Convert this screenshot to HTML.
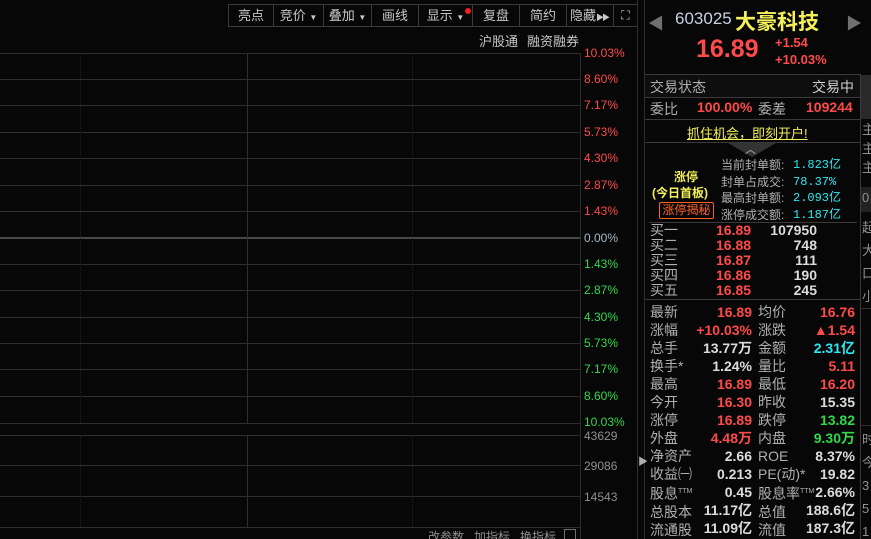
<!DOCTYPE html><html><head><meta charset="utf-8"><style>
*{margin:0;padding:0;box-sizing:border-box}
html,body{width:871px;height:539px;overflow:hidden}
body{background:#070707;position:relative;font-family:"Liberation Sans","Noto Sans CJK SC",sans-serif;font-size:13px;color:#c8c8c8}
.a{position:absolute;white-space:nowrap}
.h{position:absolute;height:1px;background:#2e2e2e}
.v{position:absolute;width:1px;background:#2e2e2e}
.d{position:absolute;width:0;border-left:1px dotted #222}
.btn{position:absolute;top:4px;height:23px;border:1px solid #3a3a3a;border-left:none;color:#c8c8c8;font-size:13px;text-align:center;line-height:21px;white-space:nowrap;overflow:hidden}
.pl{position:absolute;left:584px;font-size:12px}
.r{color:#ff4a4a}.g{color:#30d84a}.w{color:#dcdcdc}.c{color:#2ee8f0}.y{color:#f4f05a}
.lb{position:absolute;left:650px;color:#b0b0b0;font-size:14px}
.lb2{position:absolute;left:758px;color:#b0b0b0;font-size:14px}
</style></head><body>
<div class="btn" style="left:228px;width:46px;border-left:1px solid #3a3a3a">亮点</div>
<div class="btn" style="left:274px;width:50px">竞价 <span style="font-size:8px">▼</span></div>
<div class="btn" style="left:324px;width:48px">叠加 <span style="font-size:8px">▼</span></div>
<div class="btn" style="left:372px;width:47px">画线</div>
<div class="btn" style="left:419px;width:54px">显示 <span style="font-size:8px">▼</span></div>
<div class="a" style="left:465px;top:8px;width:6px;height:6px;border-radius:3px;background:#f02020"></div>
<div class="btn" style="left:473px;width:47px">复盘</div>
<div class="btn" style="left:520px;width:47px">简约</div>
<div class="btn" style="left:567px;width:47px;text-align:left;padding-left:3px">隐藏<span style="font-size:8px;letter-spacing:-2px">▶▶</span></div>
<div class="btn" style="left:614px;width:24px;font-size:12px">⛶</div>
<div class="a" style="left:479px;top:31px;font-size:13px">沪股通</div>
<div class="a" style="left:527px;top:31px;font-size:13px">融资融券</div>
<div class="h" style="left:0;top:53px;width:580px"></div>
<div class="h" style="left:0;top:79px;width:580px"></div>
<div class="h" style="left:0;top:105px;width:580px"></div>
<div class="h" style="left:0;top:132px;width:580px"></div>
<div class="h" style="left:0;top:158px;width:580px"></div>
<div class="h" style="left:0;top:185px;width:580px"></div>
<div class="h" style="left:0;top:211px;width:580px"></div>
<div class="h" style="left:0;top:237px;width:580px;height:2px;background:#484848"></div>
<div class="h" style="left:0;top:264px;width:580px"></div>
<div class="h" style="left:0;top:290px;width:580px"></div>
<div class="h" style="left:0;top:317px;width:580px"></div>
<div class="h" style="left:0;top:343px;width:580px"></div>
<div class="h" style="left:0;top:369px;width:580px"></div>
<div class="h" style="left:0;top:396px;width:580px"></div>
<div class="h" style="left:0;top:423px;width:580px"></div>
<div class="h" style="left:0;top:435px;width:580px"></div>
<div class="h" style="left:0;top:465px;width:580px"></div>
<div class="h" style="left:0;top:496px;width:580px"></div>
<div class="h" style="left:0;top:527px;width:580px"></div>
<div class="v" style="left:247px;top:53px;height:370px"></div>
<div class="v" style="left:247px;top:435px;height:92px"></div>
<div class="d" style="left:80px;top:53px;height:370px"></div>
<div class="d" style="left:412px;top:53px;height:370px"></div>
<div class="d" style="left:80px;top:435px;height:92px"></div>
<div class="d" style="left:412px;top:435px;height:92px"></div>
<div class="v" style="left:580px;top:53px;height:486px"></div>
<div class="pl r" style="top:46px">10.03%</div>
<div class="pl r" style="top:72px">8.60%</div>
<div class="pl r" style="top:98px">7.17%</div>
<div class="pl r" style="top:125px">5.73%</div>
<div class="pl r" style="top:151px">4.30%</div>
<div class="pl r" style="top:178px">2.87%</div>
<div class="pl r" style="top:204px">1.43%</div>
<div class="pl" style="top:231px;color:#a8b8c8">0.00%</div>
<div class="pl g" style="top:257px">1.43%</div>
<div class="pl g" style="top:283px">2.87%</div>
<div class="pl g" style="top:310px">4.30%</div>
<div class="pl g" style="top:336px">5.73%</div>
<div class="pl g" style="top:362px">7.17%</div>
<div class="pl g" style="top:389px">8.60%</div>
<div class="pl g" style="top:415px">10.03%</div>
<div class="pl" style="top:429px;color:#909090">43629</div>
<div class="pl" style="top:459px;color:#909090">29086</div>
<div class="pl" style="top:490px;color:#909090">14543</div>
<div class="a" style="left:428px;top:528px;font-size:12px;color:#909090">改参数&nbsp;&nbsp; 加指标&nbsp;&nbsp; 换指标</div>
<div class="a" style="left:564px;top:529px;width:12px;height:12px;border:1px solid #707070"></div>
<div class="v" style="left:637px;top:0;height:539px"></div>
<div class="v" style="left:644px;top:0;height:539px"></div>
<div class="a" style="left:638px;top:453px;color:#b0b0b0;font-size:10px">▶</div>
<div class="a" style="left:648px;top:10px;color:#707070;font-size:16px">◀</div>
<div class="a" style="left:846px;top:10px;color:#707070;font-size:16px">▶</div>
<div class="a" style="left:675px;top:9px;font-size:17px;color:#c8d0e0">603025</div>
<div class="a y" style="left:735px;top:6px;font-size:21px;font-weight:bold">大豪科技</div>
<div class="a r" style="left:696px;top:35px;font-size:25px;font-weight:bold">16.89</div>
<div class="a r" style="left:775px;top:35px;font-size:13px;font-weight:bold">+1.54</div>
<div class="a r" style="left:775px;top:52px;font-size:13px;font-weight:bold">+10.03%</div>
<div class="h" style="left:645px;top:74px;width:215px;background:#3a3a3a"></div>
<div class="a" style="left:645px;top:75px;width:215px;height:22px;background:#0e0e0e"></div>
<div class="lb" style="top:77px">交易状态</div>
<div class="a" style="left:812px;top:77px;font-size:14px;color:#d0d0d0">交易中</div>
<div class="h" style="left:645px;top:97px;width:215px;background:#3a3a3a"></div>
<div class="lb" style="top:99px">委比</div>
<div class="a r" style="left:697px;top:99px;font-size:14px;font-weight:bold">100.00%</div>
<div class="lb2" style="left:758px;top:99px">委差</div>
<div class="a r" style="left:806px;top:99px;font-size:14px;font-weight:bold">109244</div>
<div class="h" style="left:645px;top:119px;width:215px;background:#3a3a3a"></div>
<div class="a y" style="left:687px;top:123px;font-size:13px;text-decoration:underline">抓住机会，即刻开户!</div>
<div class="h" style="left:645px;top:142px;width:215px;background:#3a3a3a"></div>
<div class="a" style="left:728px;top:143px;width:0;height:0;border-left:24px solid transparent;border-right:24px solid transparent;border-top:14px solid #333"></div>
<div class="a" style="left:745px;top:141px;color:#c0c0c0;font-size:11px">︿</div>
<div class="a y" style="left:674px;top:170px;font-weight:bold;font-size:12px;line-height:15px">涨停</div>
<div class="a y" style="left:652px;top:186px;font-weight:bold;font-size:12px;line-height:15px">(今日首板)</div>
<div class="a" style="left:659px;top:202px;width:55px;height:17px;font-size:12px;color:#ff6020;border:1px solid #ff6020;border-radius:2px;text-align:center;line-height:15px">涨停揭秘</div>
<div class="a" style="left:721px;top:157px;font-size:12px;line-height:16.5px;color:#b0b0b0">当前封单额:<br>封单占成交:<br>最高封单额:<br>涨停成交额:</div>
<div class="a c" style="left:793px;top:157px;font-size:12px;line-height:16.5px;font-family:'Liberation Mono','Noto Sans CJK SC',monospace">1.823亿<br>78.37%<br>2.093亿<br>1.187亿</div>
<div class="h" style="left:649px;top:222px;width:208px;background:#3a3a3a"></div>
<div class="a" style="left:650px;top:223px;font-size:14px;line-height:15px;color:#b0b0b0">买一<br>买二<br>买三<br>买四<br>买五</div>
<div class="a r" style="left:716px;top:223px;font-size:14px;line-height:15px;font-weight:bold">16.89<br>16.88<br>16.87<br>16.86<br>16.85</div>
<div class="a w" style="left:762px;top:223px;width:55px;text-align:right;font-size:14px;line-height:15px;font-weight:bold">107950<br>748<br>111<br>190<br>245</div>
<div class="h" style="left:645px;top:299px;width:215px;background:#3a3a3a"></div>
<div class="a" style="left:650px;top:303px;font-size:14px;line-height:18px;color:#b0b0b0">最新<br>涨幅<br>总手<br>换手*<br>最高<br>今开<br>涨停<br>外盘<br>净资产<br>收益㈠<br>股息<sup style="font-size:7px">TTM</sup><br>总股本<br>流通股</div>
<div class="a" style="left:650px;top:303px;width:102px;text-align:right;font-size:14px;line-height:18px;font-weight:bold">
<span class="r">16.89</span><br><span class="r">+10.03%</span><br><span class="w">13.77万</span><br><span class="w">1.24%</span><br><span class="r">16.89</span><br><span class="r">16.30</span><br><span class="r">16.89</span><br><span class="r">4.48万</span><br><span class="w">2.66</span><br><span class="w">0.213</span><br><span class="w">0.45</span><br><span class="w">11.17亿</span><br><span class="w">11.09亿</span></div>
<div class="a" style="left:758px;top:303px;font-size:14px;line-height:18px;color:#b0b0b0">均价<br>涨跌<br>金额<br>量比<br>最低<br>昨收<br>跌停<br>内盘<br>ROE<br>PE(动)*<br>股息率<sup style="font-size:7px">TTM</sup><br>总值<br>流值</div>
<div class="a" style="left:758px;top:303px;width:97px;text-align:right;font-size:14px;line-height:18px;font-weight:bold">
<span class="r">16.76</span><br><span class="r">▲1.54</span><br><span class="c">2.31亿</span><br><span class="r">5.11</span><br><span class="r">16.20</span><br><span class="w">15.35</span><br><span class="g">13.82</span><br><span class="g">9.30万</span><br><span class="w">8.37%</span><br><span class="w">19.82</span><br><span class="w">2.66%</span><br><span class="w">188.6亿</span><br><span class="w">187.3亿</span></div>
<div class="v" style="left:860px;top:74px;height:465px;background:#3a3a3a"></div>
<div class="a" style="left:861px;top:75px;width:10px;height:44px;background:#2a2a2a"></div>
<div class="a" style="left:862px;top:120px;font-size:13px;line-height:19px;color:#909090">主<br>主<br>主</div>
<div class="a" style="left:861px;top:187px;width:10px;height:25px;background:#222"></div>
<div class="a" style="left:862px;top:190px;font-size:13px;color:#909090">0</div>
<div class="a" style="left:862px;top:216px;font-size:13px;line-height:23px;color:#909090">起<br>大<br>口<br>小</div>
<div class="h" style="left:861px;top:308px;width:10px"></div>
<div class="h" style="left:861px;top:425px;width:10px"></div>
<div class="a" style="left:862px;top:428px;font-size:13px;line-height:23px;color:#909090">时<br>今<br>3<br>5<br>1</div>
</body></html>
